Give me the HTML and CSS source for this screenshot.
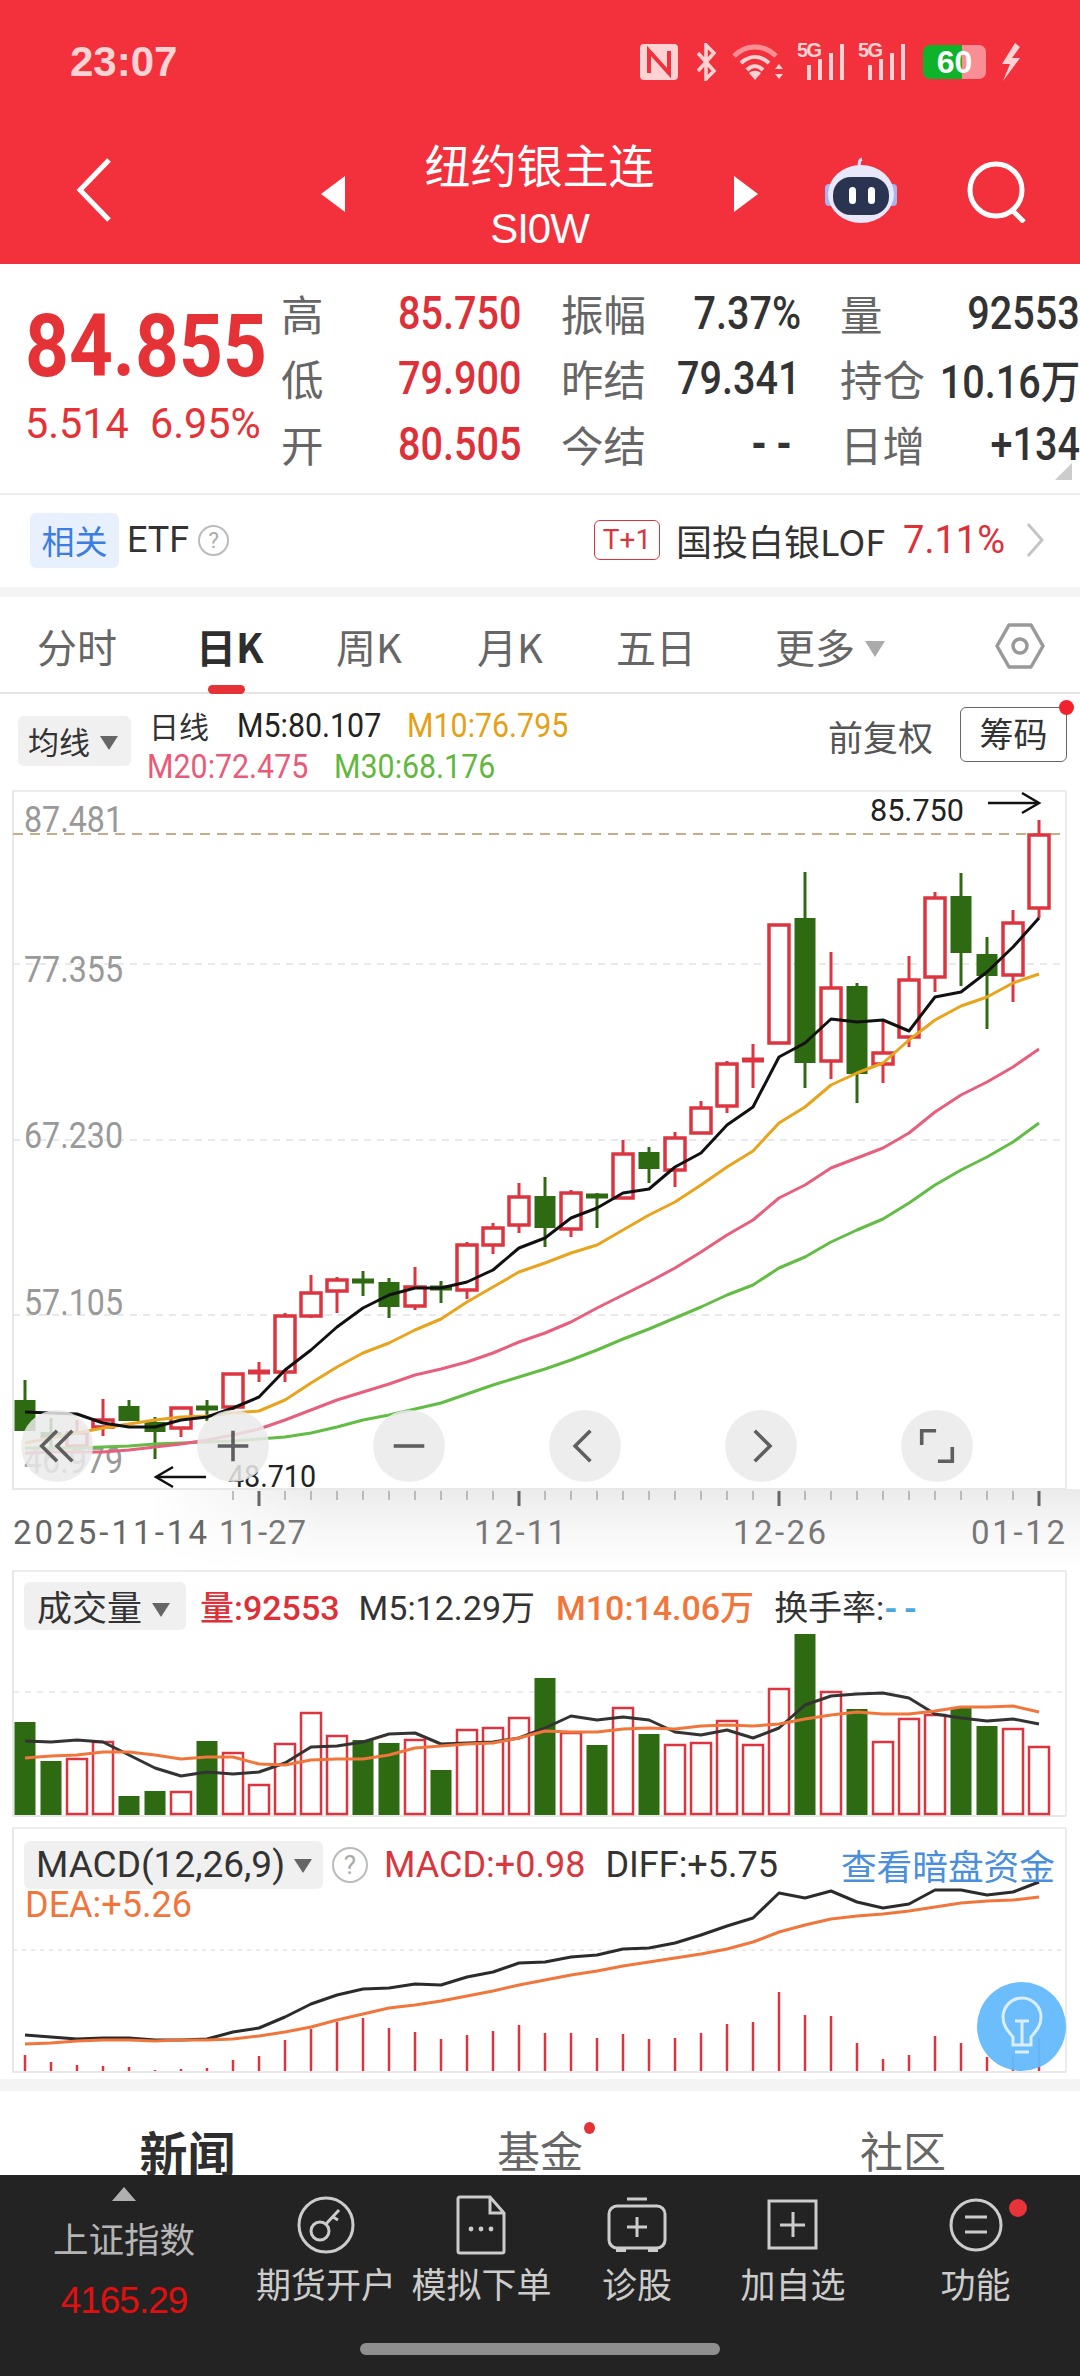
FILE: index.html
```html
<!DOCTYPE html>
<html>

<head>
    <meta charset="utf-8">
    <title>纽约银主连</title>
    <link rel="stylesheet" href="styles.css">
</head>

<body>
    <div class="top">
        <div class="status-bar">
            <span class="time">23:07</span>
            <div class="status-icons">
                <svg width="38" height="36" viewBox="0 0 38 36"><rect width="38" height="36" rx="4" fill="#ffd3d3"/><path d="M9 29V7l20 22V7" fill="none" stroke="#f3313c" stroke-width="4"/></svg>
                <svg class="st-bt" width="22" height="38" viewBox="0 0 22 38"><path d="M3 10l16 18-8 8V2l8 8L3 28" fill="none" stroke="#ffd3d3" stroke-width="3.5"/></svg>
                <svg class="st-wifi" width="52" height="38" viewBox="0 0 52 38"><path d="M2 13C14 1 32 1 44 13" fill="none" stroke="#f98f94" stroke-width="5"/><path d="M9 20c9-8 19-8 28 0" fill="none" stroke="#ffd3d3" stroke-width="4"/><path d="M15 27c5-5 11-5 16 0" fill="none" stroke="#ffd3d3" stroke-width="4"/><path d="M23 37l-6-7c4-3 8-3 12 0z" fill="#ffd3d3"/><path d="M47 21l4 5h-8zM47 36l4-5h-8z" fill="#ffd3d3"/></svg>
                <div class="signal"><span>5G</span><i class="b1"></i><i class="b2"></i><i class="b3"></i><i class="b4"></i></div>
                <div class="signal"><span>5G</span><i class="b1"></i><i class="b2"></i><i class="b3"></i><i class="b4"></i></div>
                <div class="battery"><span class="battery-level">60</span></div>
                <svg class="st-bolt" width="22" height="38" viewBox="0 0 22 38"><path d="M15 0L2 21h8L3 38l17-23h-8l8-11z" fill="#ffd3d3"/></svg>
            </div>
        </div>
        <div class="nav">
            <svg width="36" height="64" viewBox="0 0 36 64"><path d="M33 2L4 32l29 30" fill="none" stroke="#fff" stroke-width="5"/></svg>
            <div class="switcher">
                <i class="tri-left"></i>
                <div class="title">
                    <div class="title-name">纽约银主连</div>
                    <div class="title-code">SI0W</div>
                </div>
                <i class="tri-right"></i>
            </div>
            <svg class="robot" width="72" height="68" viewBox="0 0 72 68">
                <path d="M36 12c-3-3-2-8 1-9" fill="none" stroke="#dcdcf5" stroke-width="3"/>
                <rect x="0" y="28" width="8" height="22" rx="4" fill="#a7b4ee"/>
                <rect x="64" y="28" width="8" height="22" rx="4" fill="#a7b4ee"/>
                <ellipse cx="36" cy="38" rx="33" ry="29" fill="#e9e8fa"/>
                <rect x="8" y="21" width="56" height="38" rx="18" fill="#2a3350"/>
                <rect x="24" y="31" width="7" height="17" rx="3.5" fill="#fff"/>
                <rect x="43" y="31" width="7" height="17" rx="3.5" fill="#fff"/>
            </svg>
            <svg class="search" width="62" height="62" viewBox="0 0 62 62"><circle cx="30" cy="29" r="26" fill="none" stroke="#fff" stroke-width="5"/><path d="M46 49l12 12" stroke="#fff" stroke-width="5"/></svg>
        </div>
    </div>

    <div class="quote">
        <div class="price">
            <div class="price-now">84.855</div>
            <div class="price-change"><span>5.514</span><span>6.95%</span></div>
        </div>
        <div class="quote-grid">
            <span class="q-label">高</span><span class="q-val red">85.750</span>
            <span class="q-label">振幅</span><span class="q-val">7.37%</span>
            <span class="q-label">量</span><span class="q-val">92553</span>
            <span class="q-label">低</span><span class="q-val red">79.900</span>
            <span class="q-label">昨结</span><span class="q-val">79.341</span>
            <span class="q-label">持仓</span><span class="q-val">10.16万</span>
            <span class="q-label">开</span><span class="q-val red">80.505</span>
            <span class="q-label">今结</span><span class="q-val q-dash">--</span>
            <span class="q-label">日增</span><span class="q-val">+134</span>
        </div>
        <i class="corner"></i>
    </div>

    <div class="etf-row">
        <span class="etf-tag">相关</span>
        <span class="etf-name">ETF</span>
        <span class="help">?</span>
        <span class="t1">T+1</span>
        <span class="fund-name">国投白银LOF</span>
        <span class="fund-pct">7.11%</span>
        <svg width="20" height="36" viewBox="0 0 20 36"><path d="M3 2l14 16L3 34" fill="none" stroke="#c4c4c4" stroke-width="3"/></svg>
    </div>

    <div class="gap"></div>

    <div class="period-tabs">
        <span class="p-tab p1">分时</span>
        <span class="p-tab p2 active">日K</span>
        <span class="p-tab p3">周K</span>
        <span class="p-tab p4">月K</span>
        <span class="p-tab p5">五日</span>
        <span class="p-tab p6">更多<i class="caret"></i></span>
        <svg class="hex" width="50" height="46" viewBox="0 0 50 46"><path d="M14 2h22l12 21-12 21H14L2 23z" fill="none" stroke="#999" stroke-width="3.5" stroke-linejoin="round"/><circle cx="25" cy="23" r="7" fill="none" stroke="#999" stroke-width="3.5"/></svg>
    </div>

    <div class="ma-legend">
        <span class="chip ma-chip">均线<i class="caret dark"></i></span>
        <div class="ma-text">
            <div class="ma-line ma-first">
                <span class="ma-kind">日线</span><span class="squeeze c-black">M5:80.107</span><span class="squeeze c-amber">M10:76.795</span>
            </div>
            <div class="ma-line ma-second">
                <span class="squeeze c-pink">M20:72.475</span><span class="squeeze c-green">M30:68.176</span>
            </div>
        </div>
        <span class="adjust">前复权</span>
        <span class="chips-btn">筹码</span>
    </div>

    <div class="chart-main">
        <svg id="mainChart" class="chart" width="1080" height="780" viewBox="0 790 1080 780"></svg>
        <div class="chart-tools">
            <span class="tool"><svg width="40" height="40" viewBox="0 0 40 40"><path d="M20 3L3 20l17 17M37 3L20 20l17 17" fill="none" stroke="#5f5f5f" stroke-width="4"/></svg></span>
            <span class="tool"><svg width="40" height="40" viewBox="0 0 40 40"><path d="M20 3v34M3 20h34" fill="none" stroke="#5f5f5f" stroke-width="4"/></svg></span>
            <span class="tool"><svg width="40" height="40" viewBox="0 0 40 40"><path d="M3 20h34" fill="none" stroke="#5f5f5f" stroke-width="4"/></svg></span>
            <span class="tool"><svg width="40" height="40" viewBox="0 0 40 40"><path d="M26 3L9 20l17 17" fill="none" stroke="#5f5f5f" stroke-width="4"/></svg></span>
            <span class="tool"><svg width="40" height="40" viewBox="0 0 40 40"><path d="M13 3l17 17-17 17" fill="none" stroke="#5f5f5f" stroke-width="4"/></svg></span>
            <span class="tool"><svg width="40" height="40" viewBox="0 0 40 40"><path d="M3 19V3h16M37 21v16H21" fill="none" stroke="#5f5f5f" stroke-width="4"/></svg></span>
        </div>
    </div>

    <div class="panel panel-vol">
        <svg id="volChart" class="chart" width="1080" height="257" viewBox="0 1570 1080 257"></svg>
        <div class="panel-head">
            <span class="chip vol-chip">成交量<i class="caret dark"></i></span>
            <span class="v-red">量:92553</span>
            <span class="v-dark">M5:12.29万</span>
            <span class="v-orange">M10:14.06万</span>
            <span class="v-dark">换手率:<b class="v-blue">--</b></span>
        </div>
    </div>

    <div class="panel panel-macd">
        <svg id="macdChart" class="chart" width="1080" height="252" viewBox="0 1827 1080 252"></svg>
        <div class="panel-head macd-head">
            <span class="chip macd-chip">MACD(12,26,9)<i class="caret dark"></i></span>
            <span class="help help-lg">?</span>
            <span class="m-red">MACD:+0.98</span>
            <span class="m-dark">DIFF:+5.75</span>
            <span class="m-link">查看暗盘资金</span>
        </div>
        <div class="m-dea">DEA:+5.26</div>
        <div class="bulb">
            <svg width="44" height="64" viewBox="0 0 44 64"><path d="M13 42C8 36 3 31 3 22a19 19 0 0 1 38 0c0 9-5 14-10 20v8H13z" fill="none" stroke="#dbeeff" stroke-width="3"/><path d="M15 26h14M22 26v24M15 57h14" fill="none" stroke="#dbeeff" stroke-width="3"/></svg>
        </div>
    </div>

    <div class="gap gap-low"></div>

    <div class="news-tabs">
        <span class="n-tab n-active">新闻</span>
        <span class="n-tab">基金<i class="n-dot"></i></span>
        <span class="n-tab">社区</span>
    </div>

    <div class="bottom-bar">
        <div class="index-cell">
            <i class="index-up"></i>
            <div class="index-name">上证指数</div>
            <div class="index-val">4165.29</div>
        </div>
        <div class="bar-item">
            <svg width="60" height="60" viewBox="0 0 60 60"><circle cx="30" cy="30" r="27" fill="none" stroke="#ccc" stroke-width="3"/><circle cx="24" cy="36" r="9" fill="none" stroke="#ccc" stroke-width="3"/><path d="M30 29l13-14M37 22l5 3" fill="none" stroke="#ccc" stroke-width="3"/></svg>
            <span>期货开户</span>
        </div>
        <div class="bar-item">
            <svg width="60" height="60" viewBox="0 0 60 60"><path d="M8 2h30l14 16v38a2 2 0 0 1-2 2H8a2 2 0 0 1-2-2V4a2 2 0 0 1 2-2zM38 2v16h14" fill="none" stroke="#ccc" stroke-width="3"/><circle cx="19" cy="34" r="2.4" fill="#ccc"/><circle cx="29" cy="34" r="2.4" fill="#ccc"/><circle cx="39" cy="34" r="2.4" fill="#ccc"/></svg>
            <span>模拟下单</span>
        </div>
        <div class="bar-item">
            <svg width="60" height="60" viewBox="0 0 60 60"><path d="M20 4h20" stroke="#ccc" stroke-width="3"/><rect x="2" y="11" width="56" height="42" rx="8" fill="none" stroke="#ccc" stroke-width="3"/><path d="M30 22v20M20 32h20" stroke="#ccc" stroke-width="3"/><path d="M9 54h10v3H9zM41 54h10v3H41z" fill="#ccc"/></svg>
            <span>诊股</span>
        </div>
        <div class="bar-item">
            <svg width="60" height="60" viewBox="0 0 60 60"><rect x="6" y="6" width="47" height="47" fill="none" stroke="#ccc" stroke-width="3"/><path d="M30 17v25M17 30h25" stroke="#ccc" stroke-width="3"/></svg>
            <span>加自选</span>
        </div>
        <div class="bar-item item-dot">
            <svg width="60" height="60" viewBox="0 0 60 60"><circle cx="30" cy="30" r="25" fill="none" stroke="#ccc" stroke-width="3"/><path d="M19 22h22M19 37h22" stroke="#ccc" stroke-width="3"/></svg>
            <span>功能</span>
            <i class="bar-dot"></i>
        </div>
        <i class="home-line"></i>
    </div>

    <script src="chart.js"></script>
</body>

</html>
```

FILE: styles.css
```css
* {
    box-sizing: border-box;
}

html,
body {
    margin: 0;
    padding: 0;
}

body {
    width: 1080px;
    height: 2376px;
    overflow: hidden;
    position: relative;
    background-color: #fff;
    font-family: "Roboto", "Noto Sans CJK SC", sans-serif;
    color: #333;
}

i {
    display: block;
}

/* the app's digit font is tall and narrow, roboto squeezed comes closest */
.squeeze {
    display: block;
    transform: scaleX(0.92);
    transform-origin: left center;
    white-space: nowrap;
}

.top {
    height: 264px;
    background-color: #f3313c;
}

.status-bar {
    height: 124px;
    padding: 0 58px 0 70px;
    display: flex;
    justify-content: space-between;
    align-items: center;
}

.time {
    font-family: "Liberation Sans", sans-serif;
    font-size: 42px;
    font-weight: 700;
    color: #ffd3d3;
}

.status-icons {
    display: flex;
    align-items: center;
}

.st-bt {
    margin-left: 17px;
}

.st-wifi {
    margin-left: 15px;
}

.signal {
    width: 48px;
    height: 36px;
    margin-left: 13px;
    position: relative;
}

.signal span {
    position: absolute;
    left: 0;
    top: -5px;
    font-family: "Liberation Sans", sans-serif;
    font-size: 20px;
    font-weight: 700;
    color: #ffd3d3;
    letter-spacing: -1.5px;
}

.signal i {
    position: absolute;
    bottom: 0;
    width: 4px;
    background-color: #ffd3d3;
}

.signal .b1 {
    left: 10px;
    height: 15px;
}

.signal .b2 {
    left: 21px;
    height: 21px;
}

.signal .b3 {
    left: 32px;
    height: 27px;
}

.signal .b4 {
    left: 43px;
    height: 36px;
}

.battery {
    width: 63px;
    height: 34px;
    margin-left: 17px;
    border-radius: 7px;
    background: linear-gradient(90deg, #0fb32a 0, #0fb32a 62%, #f98f94 62%, #f98f94 100%);
    position: relative;
}

.battery-level {
    display: block;
    width: 100%;
    text-align: center;
    font-family: "Liberation Sans", sans-serif;
    font-size: 32px;
    line-height: 34px;
    font-weight: 700;
    color: #fff;
}

.st-bolt {
    margin-left: 14px;
}

.nav {
    height: 140px;
    display: flex;
    align-items: center;
    padding-left: 76px;
    padding-bottom: 8px;
}

.switcher {
    width: 437px;
    margin-left: 209px;
    display: flex;
    align-items: center;
    justify-content: space-between;
}

.tri-left {
    width: 0;
    height: 0;
    margin-top: 8px;
    border-top: 18px solid transparent;
    border-bottom: 18px solid transparent;
    border-right: 24px solid #fff;
}

.tri-right {
    width: 0;
    height: 0;
    margin-top: 8px;
    border-top: 18px solid transparent;
    border-bottom: 18px solid transparent;
    border-left: 24px solid #fff;
}

.title {
    text-align: center;
    color: #fff;
    margin-top: 6px;
}

.title-name {
    font-family: "Noto Sans CJK SC", sans-serif;
    font-size: 46px;
    line-height: 60px;
}

.title-code {
    margin-top: 11px;
    font-family: "Liberation Sans", sans-serif;
    font-size: 42px;
    line-height: 50px;
    letter-spacing: -1px;
}

.robot {
    margin-left: 67px;
}

.search {
    margin-left: 69px;
    margin-top: 4px;
}

.quote {
    height: 231px;
    border-bottom: 2px solid #eee;
    position: relative;
    display: flex;
}

.price {
    width: 281px;
    padding-left: 25px;
    padding-top: 36px;
    color: #e53237;
}

.price-now {
    font-size: 88px;
    line-height: 92px;
    font-weight: 700;
    transform: scaleX(0.87);
    transform-origin: left center;
}

.price-change {
    display: flex;
    font-size: 43px;
    line-height: 50px;
    margin-top: 6px;
}

.price-change span {
    display: block;
    width: 125px;
    transform: scaleX(0.96);
    transform-origin: left center;
    white-space: nowrap;
}

.quote-grid {
    width: 799px;
    padding-top: 16px;
    display: grid;
    grid-template-columns: 90px 151px 123px 156px 129px 150px;
    grid-auto-rows: 65.5px;
    align-items: center;
}

.q-label {
    font-family: "Noto Sans CJK SC", sans-serif;
    font-size: 42.5px;
    color: #666;
    line-height: 50px;
    white-space: nowrap;
}

.q-label:nth-child(6n+3),
.q-label:nth-child(6n+5) {
    padding-left: 39px;
}

.q-val {
    justify-self: end;
    font-size: 46px;
    color: #333;
    font-weight: 500;
    white-space: nowrap;
    transform: scaleX(0.86);
    transform-origin: right center;
}

.q-val.red {
    color: #dd3038;
}

.q-dash {
    letter-spacing: 11px;
    font-weight: 700;
}

.corner {
    position: absolute;
    right: 8px;
    bottom: 13px;
    width: 0;
    height: 0;
    border-left: 17px solid transparent;
    border-bottom: 17px solid #ccc;
}

.etf-row {
    height: 92px;
    display: flex;
    align-items: center;
    padding: 0 35px 2px 30px;
}

.etf-row > * {
    flex-shrink: 0;
}

.etf-tag {
    width: 89px;
    height: 55px;
    border-radius: 6px;
    background-color: #e8f0fe;
    color: #3b7de0;
    font-family: "Noto Sans CJK SC", sans-serif;
    font-size: 33px;
    line-height: 55px;
    text-align: center;
}

.etf-name {
    margin-left: 8px;
    font-size: 36px;
}

.help {
    width: 31px;
    height: 31px;
    margin-left: 9px;
    border: 2px solid #bbb;
    border-radius: 50%;
    color: #aaa;
    font-size: 22px;
    line-height: 27px;
    text-align: center;
}

.t1 {
    width: 66px;
    height: 40px;
    margin-left: auto;
    border: 1.5px solid #d9363e;
    border-radius: 6px;
    color: #d9363e;
    font-size: 28px;
    line-height: 37px;
    text-align: center;
}

.fund-name {
    margin-left: 16px;
    font-family: "Noto Sans CJK SC", sans-serif;
    font-size: 36px;
    white-space: nowrap;
}

.fund-pct {
    margin-left: 18px;
    font-size: 38px;
    color: #dd3038;
    white-space: nowrap;
}

.etf-row svg {
    margin-left: 20px;
}

.gap {
    height: 10px;
    background-color: #f4f4f4;
}

.gap-low {
    height: 12px;
}

.period-tabs {
    height: 97px;
    border-bottom: 2px solid #e4e4e4;
    position: relative;
}

.p-tab {
    position: absolute;
    top: 19px;
    font-family: "Noto Sans CJK SC", sans-serif;
    font-size: 40px;
    line-height: 60px;
    color: #666;
    white-space: nowrap;
}

.p1 {
    left: 37px;
}

.p2 {
    left: 196px;
}

.p3 {
    left: 336px;
}

.p4 {
    left: 477px;
}

.p5 {
    left: 616px;
}

.p6 {
    left: 775px;
}

.p-tab.active {
    color: #2e2e2e;
    font-weight: 700;
}

.p-tab.active::after {
    content: "";
    position: absolute;
    left: 12px;
    top: 69px;
    width: 37px;
    height: 9px;
    border-radius: 5px;
    background-color: #e53237;
}

.caret {
    display: inline-block;
    width: 0;
    height: 0;
    margin-left: 10px;
    vertical-align: 6px;
    border-left: 10px solid transparent;
    border-right: 10px solid transparent;
    border-top: 16px solid #aaa;
}

.caret.dark {
    border-left-width: 9px;
    border-right-width: 9px;
    border-top: 14px solid #666;
    vertical-align: 4px;
}

.hex {
    position: absolute;
    left: 995px;
    top: 26px;
}

.ma-legend {
    height: 96px;
    position: relative;
    display: flex;
    padding-left: 18px;
}

.chip {
    background-color: #f0f0f0;
    border-radius: 6px;
    color: #333;
    font-family: "Noto Sans CJK SC", sans-serif;
    white-space: nowrap;
}

.ma-chip {
    width: 113px;
    height: 50px;
    margin-top: 22px;
    padding-left: 10px;
    font-size: 31px;
    line-height: 50px;
}

.ma-text {
    margin-left: 18px;
    padding-top: 11px;
    font-size: 33px;
    line-height: 41px;
}

.ma-line {
    display: grid;
}

.ma-first {
    grid-template-columns: 88px 170px 200px;
}

.ma-second {
    margin-left: -2px;
    grid-template-columns: 187px 200px;
}

.ma-kind {
    font-family: "Noto Sans CJK SC", sans-serif;
    font-size: 30px;
    color: #333;
}

.c-black {
    color: #222;
}

.c-amber {
    color: #e5a014;
}

.c-pink {
    color: #ea5a78;
}

.c-green {
    color: #62b83e;
}

.adjust {
    position: absolute;
    left: 828px;
    top: 17px;
    font-family: "Noto Sans CJK SC", sans-serif;
    font-size: 35px;
    line-height: 50px;
    color: #555;
}

.chips-btn {
    position: absolute;
    left: 960px;
    top: 13px;
    width: 107px;
    height: 55px;
    border: 1.5px solid #666;
    border-radius: 6px;
    font-family: "Noto Sans CJK SC", sans-serif;
    font-size: 34px;
    line-height: 50px;
    text-align: center;
    color: #333;
}

.chips-btn::after {
    content: "";
    position: absolute;
    right: -8px;
    top: -8px;
    width: 15px;
    height: 15px;
    border-radius: 50%;
    background-color: #f3212d;
}

.chart {
    display: block;
}

.chart-main {
    height: 780px;
    position: relative;
    background:
        linear-gradient(90deg, #fff 14%, rgba(255, 255, 255, 0) 30%) no-repeat 0 100% / 100% 81px,
        linear-gradient(#ebebeb, #f7f7f7 50%, #fff) no-repeat 0 100% / 100% 81px;
}

.chart-tools {
    position: absolute;
    left: 21px;
    top: 620px;
    display: flex;
    gap: 104px;
}

.tool {
    width: 72px;
    height: 72px;
    border-radius: 50%;
    background-color: rgba(234, 234, 234, 0.85);
    display: flex;
    align-items: center;
    justify-content: center;
}

.tool svg {
    width: 36px;
    height: 36px;
}

.panel {
    position: relative;
}

.panel-head {
    position: absolute;
    left: 24px;
    top: 11px;
    display: flex;
    align-items: center;
    font-size: 34px;
    white-space: nowrap;
}

.vol-chip {
    width: 162px;
    height: 48px;
    padding-left: 13px;
    font-size: 35px;
    line-height: 48px;
    margin-right: 14px;
}

.v-red {
    color: #dd3038;
    margin-right: 19px;
    font-weight: 500;
}

.v-dark {
    color: #333;
    margin-right: 21px;
}

.v-orange {
    color: #f0763c;
    margin-right: 20px;
    font-weight: 500;
}

.v-blue {
    color: #4aa7e0;
    font-weight: 700;
    letter-spacing: 6px;
}

.panel-macd .panel-head {
    top: 12px;
    right: 25px;
    font-size: 36px;
}

.macd-chip {
    width: 299px;
    height: 48px;
    padding-left: 12px;
    font-family: "Roboto", sans-serif;
    font-size: 37px;
    line-height: 48px;
}

.macd-chip .caret {
    margin-left: 9px;
}

.help-lg {
    width: 36px;
    height: 36px;
    margin-left: 9px;
    line-height: 32px;
    font-size: 26px;
}

.m-red {
    color: #d9363e;
    margin-left: 16px;
}

.m-dark {
    color: #333;
    margin-left: 20px;
}

.m-link {
    margin-left: auto;
    color: #4a8fdc;
    font-family: "Noto Sans CJK SC", sans-serif;
    font-size: 35.7px;
}

.m-dea {
    position: absolute;
    left: 25px;
    top: 55px;
    font-size: 36px;
    line-height: 46px;
    color: #f0763c;
}

.bulb {
    position: absolute;
    left: 977px;
    top: 155px;
    width: 89px;
    height: 89px;
    border-radius: 50%;
    background-color: rgba(100, 185, 252, 0.95);
    display: flex;
    align-items: center;
    justify-content: center;
}

.news-tabs {
    height: 84px;
    overflow: hidden;
    display: grid;
    grid-template-columns: 375px 330px 396px;
    padding-top: 30px;
}

.n-tab {
    position: relative;
    justify-self: center;
    margin-top: -2px;
    font-family: "Noto Sans CJK SC", sans-serif;
    font-size: 43px;
    line-height: 60px;
    color: #666;
}

.n-active {
    margin-top: 0;
    font-size: 48px;
    font-weight: 700;
    color: #2e2e2e;
}

.n-dot {
    position: absolute;
    right: -12px;
    top: 3px;
    width: 11px;
    height: 12px;
    border-radius: 50%;
    background-color: #e53237;
}

.bottom-bar {
    position: absolute;
    left: 0;
    right: 0;
    bottom: 0;
    height: 201px;
    background-color: #232323;
    display: grid;
    grid-template-columns: 248px 156px 155px 156px 156px 209px;
    color: #ccc;
    font-family: "Noto Sans CJK SC", sans-serif;
}

.index-cell {
    display: flex;
    flex-direction: column;
    align-items: center;
    padding-top: 12px;
}

.index-up {
    width: 0;
    height: 0;
    border-left: 12.5px solid transparent;
    border-right: 12.5px solid transparent;
    border-bottom: 14px solid #b0b0b0;
}

.index-name {
    margin-top: 12px;
    font-size: 35.5px;
    line-height: 50px;
    color: #b5b5b5;
}

.index-val {
    margin-top: 13px;
    font-family: "Liberation Sans", sans-serif;
    font-size: 37px;
    line-height: 50px;
    letter-spacing: -1px;
    color: #e01010;
}

.bar-item {
    display: flex;
    flex-direction: column;
    align-items: center;
    padding-top: 20px;
    position: relative;
}

.bar-item span {
    margin-top: 3px;
    font-size: 35px;
    line-height: 50px;
    white-space: nowrap;
}

.bar-dot {
    position: absolute;
    left: 138px;
    top: 24px;
    width: 18px;
    height: 18px;
    border-radius: 50%;
    background-color: #e8333b;
}

.home-line {
    position: absolute;
    left: 360px;
    top: 168px;
    width: 360px;
    height: 12px;
    border-radius: 6px;
    background-color: #8f8f8f;
}
```

FILE: chart.js
```js
// all chart coordinates are page pixels, each svg's viewBox is set to match
const RED = '#dc3540';
const GREEN = '#2e6a12';
const X0 = 25;
const STEP = 26;

// [top, bottom, wick top, wick bottom, green?]
const candles = [
    [1400, 1431, 1380, 1431, 1], [1432, 1438, 1418, 1450, 1], [1432, 1447, 1420, 1450, 0], [1419, 1428, 1399, 1436, 0],
    [1406, 1421, 1400, 1421, 1], [1422, 1432, 1417, 1459, 1], [1407, 1429, 1407, 1437, 0], [1408, 1408, 1400, 1421, 1],
    [1373, 1408, 1373, 1410, 0], [1372, 1372, 1362, 1382, 0], [1315, 1373, 1313, 1382, 0], [1292, 1317, 1275, 1318, 0],
    [1279, 1292, 1277, 1313, 0], [1281, 1281, 1271, 1296, 1], [1282, 1307, 1278, 1318, 1], [1286, 1307, 1267, 1310, 0],
    [1288, 1288, 1281, 1303, 1], [1244, 1291, 1242, 1299, 0], [1227, 1246, 1223, 1254, 0], [1196, 1226, 1183, 1233, 0],
    [1196, 1228, 1177, 1247, 1], [1192, 1230, 1190, 1237, 0], [1196, 1196, 1193, 1228, 1], [1153, 1199, 1140, 1199, 0],
    [1152, 1169, 1147, 1183, 1], [1137, 1171, 1132, 1187, 0], [1107, 1134, 1101, 1134, 0], [1063, 1107, 1061, 1113, 0],
    [1060, 1060, 1044, 1088, 0], [924, 1044, 924, 1044, 0], [918, 1063, 872, 1088, 1], [987, 1062, 952, 1079, 0],
    [986, 1074, 983, 1103, 1], [1052, 1065, 1020, 1083, 0], [979, 1038, 956, 1047, 0], [897, 978, 892, 992, 0],
    [896, 953, 873, 986, 1], [954, 976, 937, 1029, 1], [922, 976, 910, 1002, 0], [834, 909, 820, 918, 0]
];

const ma5 = [1412, 1413, 1414, 1423, 1427, 1427, 1420, 1417, 1408, 1397, 1370, 1350, 1327, 1308, 1295, 1288, 1288, 1282, 1270, 1248,
    1238, 1218, 1208, 1193, 1189, 1167, 1153, 1125, 1107, 1057, 1043, 1019, 1022, 1020, 1031, 997, 992, 972, 947, 918];
const ma10 = [1443, 1438, 1433, 1428, 1424, 1420, 1417, 1416, 1413, 1411, 1400, 1383, 1367, 1353, 1343, 1330, 1319, 1302, 1287, 1272,
    1263, 1253, 1245, 1230, 1215, 1202, 1185, 1167, 1151, 1123, 1107, 1085, 1073, 1063, 1040, 1020, 1006, 997, 983, 974];
const ma20 = [1453, 1452, 1452, 1452, 1450, 1447, 1444, 1440, 1435, 1429, 1420, 1410, 1400, 1392, 1384, 1375, 1369, 1362, 1353, 1342,
    1333, 1322, 1308, 1295, 1282, 1268, 1252, 1235, 1220, 1198, 1185, 1168, 1158, 1148, 1133, 1112, 1095, 1082, 1067, 1049];
const ma30 = [1448, 1448, 1448, 1447, 1446, 1444, 1443, 1442, 1441, 1439, 1437, 1433, 1427, 1420, 1415, 1409, 1403, 1394, 1385, 1377,
    1369, 1360, 1350, 1339, 1329, 1318, 1307, 1295, 1285, 1268, 1257, 1242, 1230, 1219, 1203, 1185, 1170, 1157, 1142, 1123];

const volume = [[1722, 1], [1761, 1], [1759, 0], [1742, 0], [1796, 1], [1791, 1], [1792, 0], [1741, 1], [1753, 0], [1785, 0],
    [1744, 0], [1713, 0], [1736, 0], [1740, 1], [1743, 1], [1740, 0], [1770, 1], [1730, 0], [1728, 0], [1718, 0],
    [1678, 1], [1733, 0], [1745, 1], [1708, 0], [1734, 1], [1745, 0], [1743, 0], [1721, 0], [1745, 0], [1689, 0],
    [1634, 1], [1692, 0], [1709, 1], [1742, 0], [1719, 0], [1715, 0], [1707, 1], [1726, 1], [1729, 0], [1747, 0]];
const volM5 = [1741, 1742, 1740, 1742, 1755, 1768, 1776, 1772, 1774, 1772, 1763, 1747, 1746, 1742, 1734, 1733, 1744, 1743, 1742, 1738,
    1728, 1716, 1720, 1717, 1720, 1732, 1735, 1730, 1738, 1728, 1705, 1696, 1694, 1693, 1698, 1714, 1718, 1721, 1719, 1724];
const volM10 = [1758, 1756, 1755, 1752, 1752, 1755, 1759, 1757, 1757, 1764, 1765, 1760, 1759, 1759, 1755, 1748, 1746, 1744, 1743, 1738,
    1731, 1732, 1732, 1729, 1728, 1729, 1726, 1725, 1726, 1724, 1719, 1715, 1712, 1714, 1714, 1711, 1707, 1707, 1706, 1712];

const macd = [2055, 2062, 2065, 2066, 2067, 2070, 2069, 2068, 2060, 2056, 2040, 2029, 2022, 2018, 2028, 2032, 2039, 2035, 2031, 2025,
    2033, 2033, 2038, 2034, 2039, 2038, 2033, 2024, 2022, 1992, 2015, 2016, 2043, 2059, 2055, 2036, 2043, 2057, 2055, 2038];
const diff = [2035, 2037, 2039, 2038, 2038, 2040, 2040, 2039, 2032, 2028, 2017, 2004, 1995, 1989, 1988, 1984, 1985, 1977, 1972, 1963,
    1962, 1957, 1955, 1949, 1948, 1943, 1935, 1926, 1918, 1893, 1898, 1891, 1902, 1908, 1904, 1890, 1890, 1895, 1892, 1882];
const dea = [2044, 2043, 2041, 2040, 2040, 2041, 2040, 2040, 2039, 2036, 2032, 2027, 2020, 2014, 2008, 2005, 2001, 1996, 1991, 1985,
    1980, 1975, 1971, 1966, 1962, 1958, 1954, 1949, 1942, 1932, 1925, 1919, 1916, 1914, 1911, 1907, 1903, 1901, 1900, 1897];

function xAt(i) {
    return X0 + STEP * i;
}

function add(svg, tag, attrs, text) {
    const el = document.createElementNS('http://www.w3.org/2000/svg', tag);
    for (const key in attrs) {
        el.setAttribute(key, attrs[key]);
    }
    if (text) {
        el.textContent = text;
    }
    svg.appendChild(el);
    return el;
}

function line(svg, x1, y1, x2, y2, color, width, dash) {
    const attrs = { x1, y1, x2, y2, stroke: color, 'stroke-width': width };
    if (dash) {
        attrs['stroke-dasharray'] = dash;
    }
    add(svg, 'line', attrs);
}

function curve(svg, ys, color, width) {
    const points = ys.map((y, i) => xAt(i) + ',' + y).join(' ');
    add(svg, 'polyline', { points, fill: 'none', stroke: color, 'stroke-width': width, 'stroke-linejoin': 'round' });
}

function frame(svg, top, bottom) {
    line(svg, 12, top, 1066, top, '#ececec', 2);
    line(svg, 13, top, 13, bottom, '#e8e8e8', 2);
    line(svg, 1066, top, 1066, bottom, '#ececec', 2);
    line(svg, 12, bottom, 1066, bottom, '#e8e8e8', 2);
}

// width is the width the text has in the reference, adjust says how to reach it
function label(svg, x, y, text, color, size, width, adjust) {
    add(svg, 'text', {
        x, y, fill: color, 'font-size': size, 'font-family': 'Roboto, sans-serif',
        textLength: width, lengthAdjust: adjust || 'spacingAndGlyphs'
    }, text);
}

function drawMain() {
    const svg = document.getElementById('mainChart');
    frame(svg, 791, 1489);
    line(svg, 13, 834, 1062, 834, '#c9ad86', 2, '10 7');
    [964, 1140, 1315].forEach((y) => line(svg, 13, y, 1062, y, '#e2e2e2', 1.5, '7 6'));

    const values = [['87.481', 832], ['77.355', 982], ['67.230', 1148], ['57.105', 1315], ['46.979', 1473]];
    values.forEach((v) => label(svg, 24, v[1], v[0], '#999', 36, 99));

    candles.forEach((c, i) => {
        const x = xAt(i);
        const color = c[4] ? GREEN : RED;
        line(svg, x, c[2], x, c[3], color, 3);
        if (c[0] === c[1]) {
            add(svg, 'rect', { x: x - 11, y: c[0] - 2.5, width: 22, height: 5, fill: color });
        } else if (c[4]) {
            add(svg, 'rect', { x: x - 10.5, y: c[0], width: 21, height: c[1] - c[0], fill: color });
        } else {
            add(svg, 'rect', { x: x - 10, y: c[0] + 1, width: 20, height: c[1] - c[0] - 2, fill: '#fff', stroke: color, 'stroke-width': 3.5 });
        }
    });

    curve(svg, ma30, '#63bd45', 3);
    curve(svg, ma20, '#e85f7e', 3);
    curve(svg, ma10, '#e8a41c', 3);
    curve(svg, ma5, '#111', 3);

    label(svg, 870, 821, '85.750', '#222', 31, 94);
    line(svg, 988, 803, 1038, 803, '#111', 2.5);
    add(svg, 'path', { d: 'M1022 793l17 10-17 10', fill: 'none', stroke: '#111', 'stroke-width': 2.5 });
    label(svg, 228, 1487, '48.710', '#222', 31, 88);
    line(svg, 157, 1477, 206, 1477, '#111', 2.5);
    add(svg, 'path', { d: 'M173 1467l-17 10 17 10', fill: 'none', stroke: '#111', 'stroke-width': 2.5 });

    // axis ticks, the long ones sit under a date
    for (let i = 8; i < 40; i++) {
        const major = (i - 9) % 10 === 0;
        line(svg, xAt(i), 1491, xAt(i), major ? 1506 : 1500, major ? '#666' : '#aaa', major ? 3 : 1.5);
    }
    label(svg, 13, 1544, '2025-11-14', '#666', 33, 194, 'spacing');
    label(svg, 219, 1544, '11-27', '#777', 33, 87, 'spacing');
    label(svg, 474, 1544, '12-11', '#777', 33, 92, 'spacing');
    label(svg, 733, 1544, '12-26', '#777', 33, 93, 'spacing');
    label(svg, 971, 1544, '01-12', '#777', 33, 94, 'spacing');
}

function drawVolume() {
    const svg = document.getElementById('volChart');
    frame(svg, 1571, 1816);
    line(svg, 13, 1692, 1062, 1692, '#e8e8e8', 1.5, '6 6');
    volume.forEach((v, i) => {
        const x = xAt(i);
        if (v[1]) {
            add(svg, 'rect', { x: x - 10.5, y: v[0], width: 21, height: 1815 - v[0], fill: GREEN });
        } else {
            add(svg, 'rect', { x: x - 10, y: v[0], width: 20, height: 1814 - v[0], fill: '#fff', stroke: RED, 'stroke-width': 2.5 });
        }
    });
    curve(svg, volM5, '#333', 3);
    curve(svg, volM10, '#f0763c', 3);
}

function drawMacd() {
    const svg = document.getElementById('macdChart');
    frame(svg, 1828, 2072);
    line(svg, 13, 1950, 1062, 1950, '#e4e4e4', 1.5, '4 5');
    macd.forEach((y, i) => line(svg, xAt(i), y, xAt(i), 2071, RED, 2.5));
    curve(svg, diff, '#2b2b2b', 3);
    curve(svg, dea, '#f0763c', 3);
}

drawMain();
drawVolume();
drawMacd();
```
